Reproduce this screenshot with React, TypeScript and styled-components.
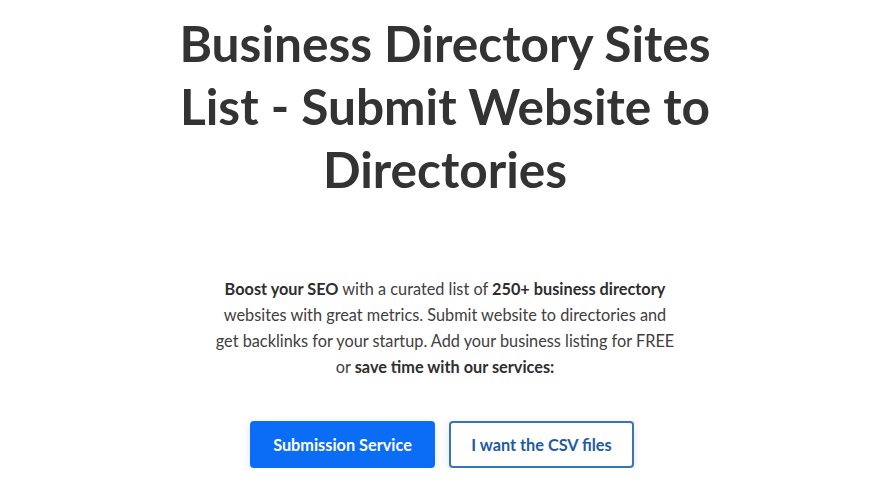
import React from "react";
import styled, { createGlobalStyle } from "styled-components";

const Global = createGlobalStyle`
  html, body { margin: 0; padding: 0; background: #ffffff; }
  body { font-family: Lato, "Noto Sans", sans-serif; color: #333333; }
`;

const Hero = styled.section`
  display: flex;
  flex-direction: column;
  align-items: center;
  padding-top: 12px;
  text-align: center;
`;

const Title = styled.h1`
  margin: 0;
  font-size: 49.6px;
  line-height: 63px;
  font-weight: 700;
  color: #333333;
`;

const Lead = styled.p`
  margin: 75px 0 0;
  font-size: 16.3px;
  line-height: 26px;
  color: #404040;
  & strong { font-weight: 700; color: #2e2e2e; }
`;

const Actions = styled.div`
  display: flex;
  gap: 14px;
  margin-top: 41px;
  padding-right: 6px;
`;

const Button = styled.button<{ $variant: "solid" | "outline" }>`
  box-sizing: border-box;
  width: 185px;
  height: 47px;
  border-radius: 4px;
  font-family: Lato, "Noto Sans", sans-serif;
  font-size: 16.3px;
  font-weight: 700;
  cursor: pointer;
  box-shadow: 0 2px 8px rgba(30, 60, 120, 0.14);
  border: 2px solid ${(p) => (p.$variant === "solid" ? "#0b6cf6" : "#3a74b8")};
  background: ${(p) => (p.$variant === "solid" ? "#0b6cf6" : "#ffffff")};
  color: ${(p) => (p.$variant === "solid" ? "#ffffff" : "#1f5aa6")};
`;

export default function App() {
  return (
    <>
      <Global />
      <Hero>
        <Title>
          Business Directory Sites
          <br />
          List - Submit Website to
          <br />
          Directories
        </Title>
        <Lead>
          <strong>Boost your SEO</strong> with a curated list of{" "}
          <strong>250+ business directory</strong>
          <br />
          websites with great metrics. Submit website to directories and
          <br />
          get backlinks for your startup. Add your business listing for FREE
          <br />
          or <strong>save time with our services:</strong>
        </Lead>
        <Actions>
          <Button $variant="solid">Submission Service</Button>
          <Button $variant="outline">I want the CSV files</Button>
        </Actions>
      </Hero>
    </>
  );
}
